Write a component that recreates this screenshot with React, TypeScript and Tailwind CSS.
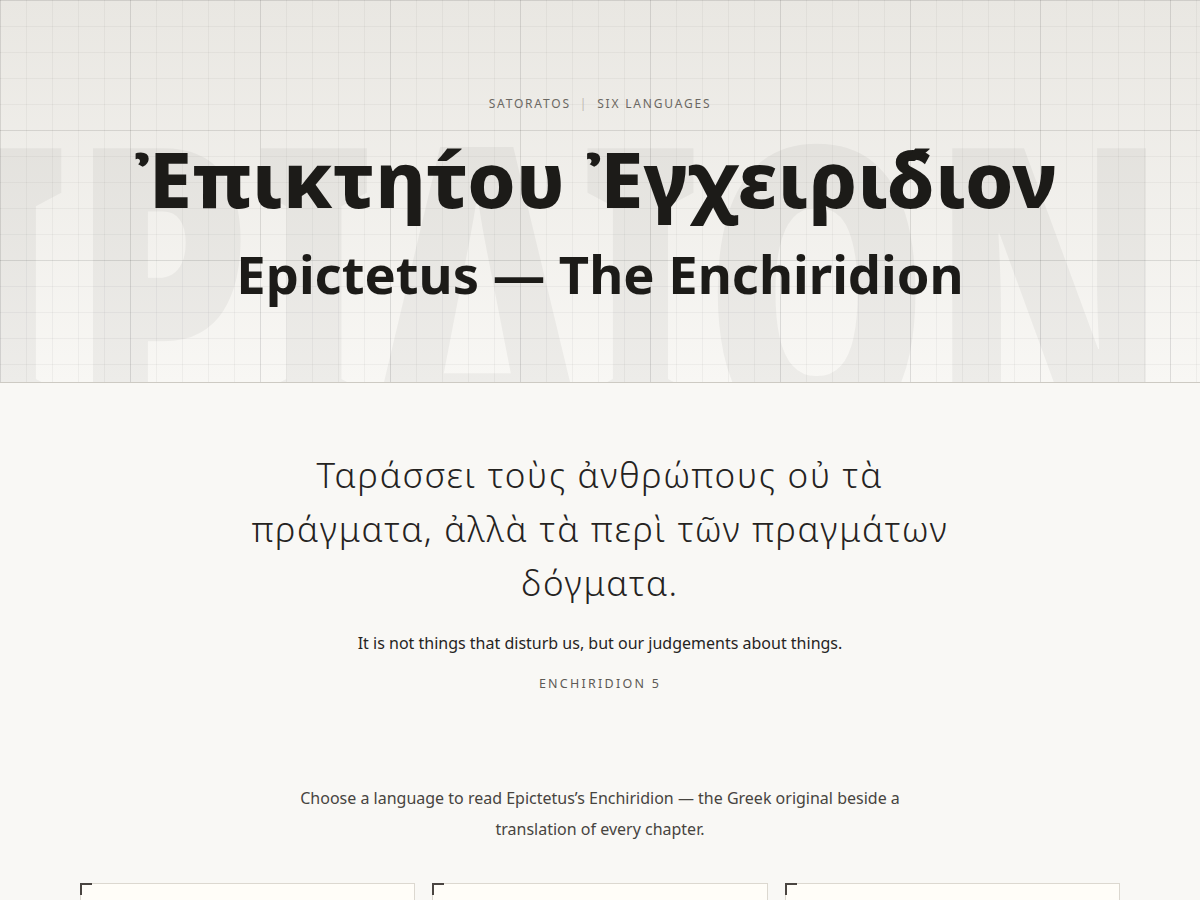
const cards = ['greek', 'english', 'other'];

function Card() {
  return (
    <div className="relative min-h-[220px] border border-[#dcd8d0] bg-[#fffdf8]">
      <span className="absolute -left-px -top-px h-3 w-3 border-l-2 border-t-2 border-[#4a4541]" />
    </div>
  );
}

export default function App() {
  return (
    <div className="min-h-screen bg-[#f9f8f5] text-[#1c1b18] [font-family:'Noto_Sans',sans-serif]">
      <header className="relative overflow-hidden border-b border-[#cdcac3] bg-[linear-gradient(to_right,rgba(0,0,0,0.075)_1px,transparent_1px),linear-gradient(to_bottom,rgba(0,0,0,0.075)_1px,transparent_1px),linear-gradient(to_right,rgba(0,0,0,0.04)_1px,transparent_1px),linear-gradient(to_bottom,rgba(0,0,0,0.04)_1px,transparent_1px),linear-gradient(to_bottom,#e9e7e2,#f8f7f4)] bg-[size:130px_130px,130px_130px,26px_26px,26px_26px,100%_100%] pb-[81px] pt-[96px]">
        {/* faint watermark, clipped by the header */}
        <div className="pointer-events-none absolute right-[32px] top-[78px] origin-top scale-y-[1.42] select-none whitespace-nowrap text-[285px] font-black leading-none text-black/[0.045]">
          ΕΓΧΕΙΡΙΔΙΟΝ
        </div>
        <div className="relative flex flex-col items-center">
          <p className="text-[12px] leading-4 tracking-[0.15em] text-[#6b6863]">
            SATORATOS<span className="mx-[9px] text-[#bdb9b2]">|</span>SIX LANGUAGES
          </p>
          <h1 className="mt-[28px] -translate-x-[4px] text-[77px] font-extrabold leading-none tracking-[0.005em]">
            Ἐπικτητ́ου Ἐγχειριδ́ιον
          </h1>
          <h2 className="mt-[31px] text-[52.5px] font-bold leading-none">Epictetus — The Enchiridion</h2>
        </div>
      </header>

      <main className="flex flex-col items-center px-6 pt-[65px]">
        <blockquote className="max-w-[720px] text-center text-[35px] font-light leading-[54px] tracking-[0.05em] text-[#25231f]">
          Ταράσσει τοὺς ἀνθρώπους οὐ τὰ πράγματα, ἀλλὰ τὰ περὶ τῶν πραγμάτων δόγματα.
        </blockquote>
        <p className="mt-5 text-[16px] leading-[26px] text-[#26241f]">
          It is not things that disturb us, but our judgements about things.
        </p>
        <p className="mt-[19px] text-[12.5px] leading-[18px] tracking-[0.18em] text-[#5d5a55]">ENCHIRIDION 5</p>

        <p className="mt-[90px] max-w-[620px] text-center text-[16px] leading-[31px] text-[#47443f]">
          Choose a language to read Epictetus’s Enchiridion — the Greek original beside a translation of every chapter.
        </p>

        <div className="mt-[38px] grid w-full max-w-[1040px] grid-cols-3 gap-[17px]">
          {cards.map((c) => (
            <Card key={c} />
          ))}
        </div>
      </main>
    </div>
  );
}
